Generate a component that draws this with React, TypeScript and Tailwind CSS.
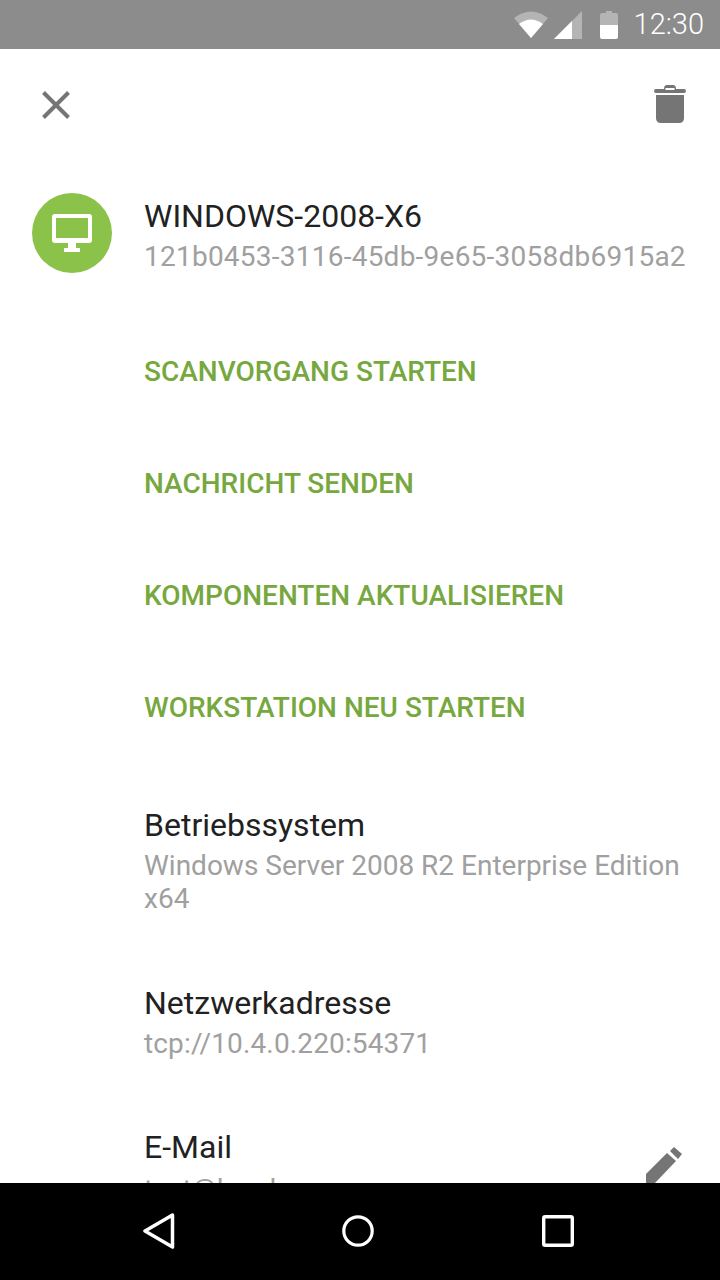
export default function App() {
  const actions = ["SCANVORGANG STARTEN", "NACHRICHT SENDEN", "KOMPONENTEN AKTUALISIEREN", "WORKSTATION NEU STARTEN"];
  return (
    <div className="w-[720px] h-[1280px] flex flex-col bg-white overflow-hidden font-['Roboto',sans-serif]">
      <div className="h-[49px] shrink-0 bg-[#8c8c8c] flex items-center justify-end">
        <svg width="36" height="28" viewBox="0 0 36 28">
          <path d="M18 27 L1 7 Q18 -6 35 7 Z" fill="#b4b4b4" />
          <path d="M18 27 L6 13 Q18 4 30 13 Z" fill="#fff" />
        </svg>
        <svg width="28" height="28" viewBox="0 0 28 28" className="ml-[5px]">
          <path d="M0 28 L28 0 V28 Z" fill="#b4b4b4" />
          <path d="M0 28 L18 10 V28 Z" fill="#fff" />
        </svg>
        <svg width="18" height="28" viewBox="0 0 18 28" className="ml-[18px]">
          <path d="M6 0h6v2h4a2 2 0 0 1 2 2v10H0V4a2 2 0 0 1 2-2h4z" fill="#b4b4b4" />
          <path d="M0 14h18v12a2 2 0 0 1-2 2H2a2 2 0 0 1-2-2z" fill="#fff" />
        </svg>
        <span className="ml-[16px] mr-[16px] text-[29px] leading-none text-white font-light">12:30</span>
      </div>
      <div className="flex-1 min-h-0 overflow-hidden relative">
        <div className="h-[112px] flex items-center justify-between pl-[42px] pr-[34px]">
          <svg width="28" height="28" viewBox="0 0 28 28">
            <path d="M1.5 1.5 L26.5 26.5 M26.5 1.5 L1.5 26.5" stroke="#757575" strokeWidth="4" />
          </svg>
          <svg width="32" height="38" viewBox="0 0 32 38" className="mb-[2px]">
            <path d="M10 4 Q10 0 13 0 H19 Q22 0 22 4 H30 Q32 4 32 6 Q32 8 30 8 H2 Q0 8 0 6 Q0 4 2 4 Z" fill="#757575" />
            <path d="M2 10 H30 V33 Q30 38 25 38 H7 Q2 38 2 33 Z" fill="#757575" />
            <rect x="11.5" y="3" width="9" height="2" fill="#fff" />
          </svg>
        </div>
        <div className="flex items-start pt-[32px] pl-[32px]">
          <div className="w-[80px] h-[80px] rounded-full bg-[#8bc34a] flex items-center justify-center shrink-0">
            <svg width="40" height="39" viewBox="0 0 40 39">
              <path fillRule="evenodd" d="M3 0 H37 Q40 0 40 3 V26 Q40 29 37 29 H3 Q0 29 0 26 V3 Q0 0 3 0 Z M4 4 V24 H36 V4 Z" fill="#fff" />
              <path d="M16 29 H24 V34 H28 V38 H12 V34 H16 Z" fill="#fff" />
            </svg>
          </div>
          <div className="ml-[32px]">
            <div className="text-[32px] leading-[40px] text-[#212121] mt-[3px] whitespace-nowrap">WINDOWS-2008-X6</div>
            <div className="text-[28px] leading-[40px] text-[#a0a0a0] tracking-[0.24px] mt-[1px] whitespace-nowrap">121b0453-3116-45db-9e65-3058db6915a2</div>
          </div>
        </div>
        <div className="pl-[144px] pt-[39px]">
          {actions.map((a) => (
            <div key={a} className="h-[112px] flex items-center text-[#76a83e] text-[28px] font-medium whitespace-nowrap">{a}</div>
          ))}
        </div>
        <div className="pl-[144px] pr-[32px] mt-[41px]">
          <div className="text-[32px] leading-[40px] text-[#212121]">Betriebssystem</div>
          <div className="text-[28px] leading-[33px] text-[#a0a0a0] mt-[4px]">Windows Server 2008 R2 Enterprise Edition x64</div>
          <div className="text-[32px] leading-[40px] text-[#212121] mt-[68px]">Netzwerkadresse</div>
          <div className="text-[28px] leading-[40px] text-[#a0a0a0] tracking-[0.14px] mt-[1px]">tcp://10.4.0.220:54371</div>
          <div className="text-[32px] leading-[40px] text-[#212121] mt-[63px]">E-Mail</div>
          <div className="text-[28px] leading-[40px] text-[#a0a0a0] mt-[3px]">test@local.org</div>
        </div>
        <svg width="38" height="38" viewBox="0 0 38 38" className="absolute left-[645px] top-[1097px]">
          <path d="M1 28 L22 7 L31 15 L10 37 H1 Z" fill="#757575" />
          <path d="M25 5 L29 1 L37 8 L33 13 Z" fill="#757575" />
        </svg>
      </div>
      <div className="h-[97px] shrink-0 bg-black flex items-center pb-[1px]">
        <svg width="32" height="36" viewBox="0 0 32 36" className="ml-[143px]">
          <path d="M29.5 2 L2 18 L29.5 34 Z" fill="none" stroke="#fff" strokeWidth="3.5" strokeLinejoin="round" />
        </svg>
        <svg width="32" height="32" viewBox="0 0 32 32" className="ml-[167px]">
          <circle cx="16" cy="16" r="14.2" fill="none" stroke="#fff" strokeWidth="3.2" />
        </svg>
        <svg width="32" height="32" viewBox="0 0 32 32" className="ml-[168px]">
          <rect x="1.7" y="1.7" width="28.6" height="28.6" rx="1.5" fill="none" stroke="#fff" strokeWidth="3.4" />
        </svg>
      </div>
    </div>
  );
}
